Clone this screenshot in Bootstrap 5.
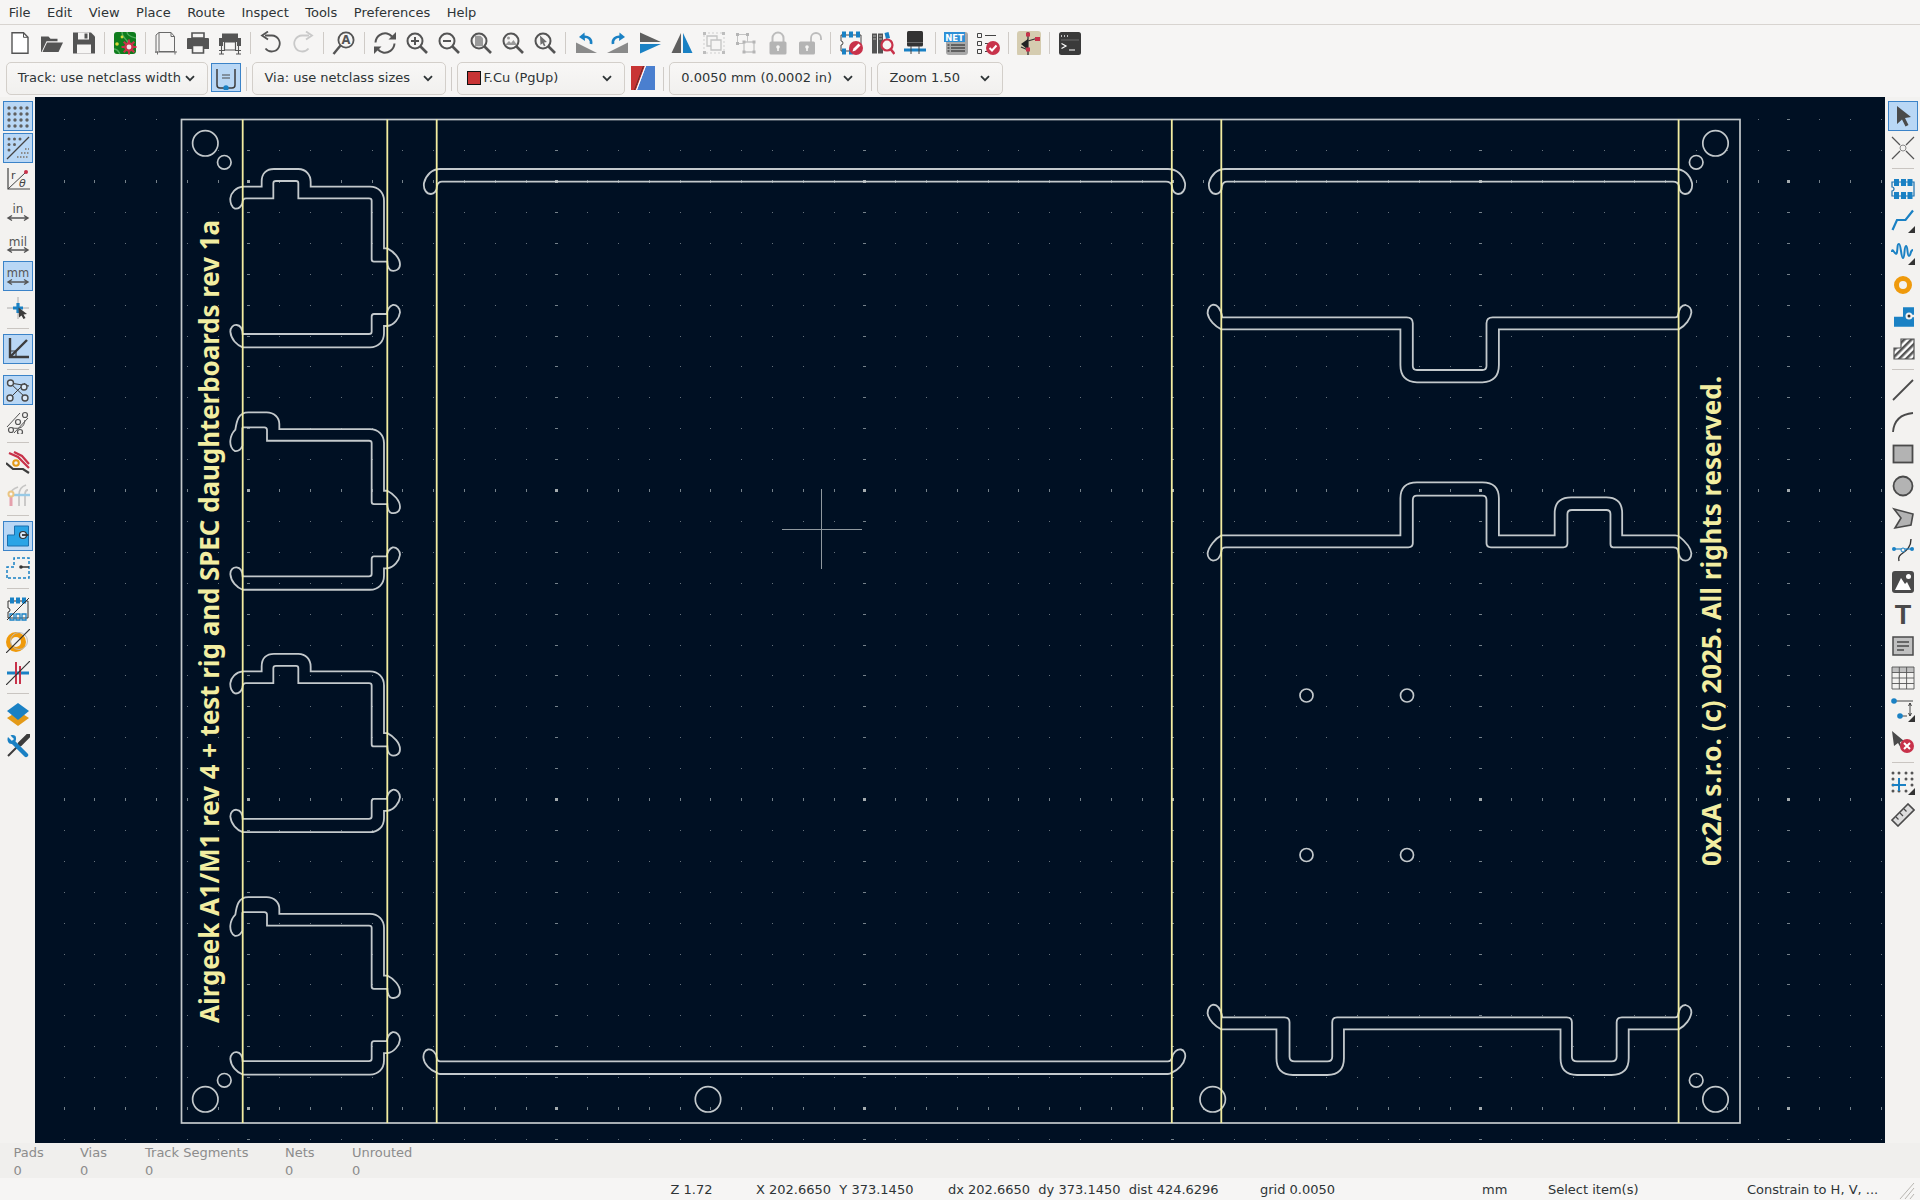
<!doctype html>
<html lang="en"><head><meta charset="utf-8"><title>PCB Editor</title>
<link href="https://cdn.jsdelivr.net/npm/bootstrap@5.3.0/dist/css/bootstrap.min.css" rel="stylesheet">
<style>
html,body{height:1200px;overflow:hidden}
body{font-family:"DejaVu Sans",sans-serif;font-size:13px;color:#2e3436;background:#f6f5f4;width:1920px}
.defs-holder{display:block;height:0;width:0}
.appmenu{height:25px;border-bottom:1px solid #d8d4d0;padding-left:.5px}
.appmenu span{padding:0 8.25px;line-height:23px}
.bar1{height:35px;padding-left:3.6px}
.tb{width:32px;height:35px;flex:none}
.vs{width:1px;height:22px;background:#cfcbc7;margin:0 4px;flex:none}
.bar2{height:37px;padding:1.5px 0 0 5.7px}
.cmb{height:33px;border:1px solid #d3cfca;border-radius:5px;background:linear-gradient(#f8f7f6,#f1f0ee);padding:0 12px 0 11px;flex:none;white-space:nowrap}
.c-track{width:202.3px}.c-via{width:193.2px}.c-layer{width:167.9px;padding-left:9px}.c-grid{width:196.4px}.c-zoom{width:125.5px}
.tgl{width:29.3px;height:29px;margin:1.5px 0 0 3.4px;background:#b9d7f5;border:1px solid #3b83c8;flex:none}
.vs2{width:1px;height:24px;background:#cfcbc7;margin:5px 5.4px 0;flex:none}
.swatch{width:14px;height:14px;background:#c83434;border:1px solid #111;margin-right:2px}
.lyicon{margin:4.5px 8px 0 5.6px;flex:none}
.workarea{height:1046px}
.side{width:35px;flex:none;padding-top:3px;background:#f3f2f0}
.sb{width:35px;height:32px;flex:none}
.sb.on>div{width:30px;height:30px;background:#b9d7f5;border:1px solid #3b83c8}
.hs{width:22px;height:1px;background:#c9c5c1;margin:4px 6.5px;flex:none}
.pcb{display:block;background:#001023;flex:none}
.edge{fill:none;stroke:#c3c9cc;stroke-width:1.8;vector-effect:non-scaling-stroke}
.hole{fill:none;stroke:#c3c9cc;stroke-width:1.7}
.silk{stroke:#f2eda1;stroke-width:1.8}
.brd{fill:#f2eda1;font-family:"Noto Sans",sans-serif;font-weight:700}
.msgpanel{height:35px;background:#f0efed;padding:1px 0 0 13.5px;color:#8c8c8c;line-height:17.5px}
.mc1{width:66.5px}.mc2{width:65px}.mc3{width:140px}.mc4{width:67px}
.statusline{height:22px;padding-left:670.5px;line-height:23px;white-space:pre}
.s1{width:85.5px}.s2{width:192px}.s3{width:312px}.s4{width:222px}.s5{width:66px}.s6{width:199px}.s7{width:150px}
</style></head>
<body>
<svg class="defs-holder">
<defs>
<g id="lens"><circle cx="10" cy="10" r="7.5" fill="none" stroke="#545454" stroke-width="2"/><path d="M15.5 15.5 22 22" stroke="#545454" stroke-width="2.6"/></g>
<symbol id="i-new" viewBox="0 0 24 24"><path d="M4 1.800h11.500l4.500 4.500v16H4z" fill="#fff" stroke="#545454" stroke-width="1.400"/><path d="M15.500 1.800v4.500h4.500" fill="none" stroke="#545454"/></symbol>
<symbol id="i-open" viewBox="0 0 24 24"><path d="M1 21V5.500h7.500l2 2.200h7v2.600H6.500L1.500 21z" fill="#545454"/><path d="M7 11.500h16L18.500 21H2.500z" fill="#545454"/></symbol>
<symbol id="i-save" viewBox="0 0 24 24"><path d="M1 1.500h18l4 4v17H1z" fill="#545454"/><path d="M6 1.500h11v7H6z" fill="#f6f5f4"/><path d="M12.500 2.500h3v5h-3z" fill="#545454"/><path d="M5 13.500h14v9H5z" fill="#f6f5f4"/></symbol>
<symbol id="i-board" viewBox="0 0 24 24"><rect x="1" y="1" width="22" height="22" rx="3" fill="#0f7d1d"/><path d="M9 1c0 7 5 6 6 11M14 1c0 4 5 5 9 6M1 18c4 0 4 2 6 5" fill="none" stroke="#52ad5c" stroke-width="1.300"/><circle cx="4" cy="13" r="1.800" fill="#d8d83c"/><circle cx="9" cy="6" r="1.400" fill="#d8d83c"/><path d="M16 8.500v15M8.500 16h15M10.700 10.700l10.600 10.600M21.300 10.700 10.700 21.300" stroke="#c8324a" stroke-width="2"/><circle cx="16" cy="16" r="4.800" fill="#c8324a"/><circle cx="16" cy="16" r="2.400" fill="#f3e7e7"/></symbol>
<symbol id="i-page" viewBox="0 0 24 24"><path d="M5 1.500H17l3.500 4v15H5zM5 1.500 2 4v18" fill="#f6f5f4" stroke="#6a6a6a"/><path d="M17 1.500v4h3.500M1 21h22M3.500 23.500v-3M21 23.500v-3" fill="none" stroke="#6a6a6a"/></symbol>
<symbol id="i-print" viewBox="0 0 24 24"><path d="M6 2h12v5H6z" fill="#f6f5f4" stroke="#545454" stroke-width="1.600"/><path d="M2 7h20q1 0 1 1v10h-5v-4H6v4H1V8q0-1 1-1z" fill="#545454"/><path d="M6.500 14.500h11V22h-11z" fill="#f6f5f4" stroke="#545454" stroke-width="1.600"/></symbol>
<symbol id="i-plot" viewBox="0 0 24 24"><path d="M4 2.500h16V7H4z" fill="#545454"/><path d="M1 7h22v8h-4v-4H5v4H1z" fill="#545454"/><path d="M6.500 11h11v8h-11z" fill="#f6f5f4" stroke="#545454" stroke-width="1.200"/><path d="M3.500 15v8M20.500 15v8M1 19.500h6M17 19.500h6M1 23h5M18 23h5" stroke="#545454" stroke-width="1.100"/></symbol>
<symbol id="i-undo" viewBox="0 0 24 24"><path d="M6 4.500h7a8 8 0 1 1-6.500 13" fill="none" stroke="#545454" stroke-width="1.800"/><path d="M9 .5 3 4.500l6 4" fill="none" stroke="#545454" stroke-width="1.800"/></symbol>
<symbol id="i-redo" viewBox="0 0 24 24"><path d="M18 4.500h-7a8 8 0 1 0 6.500 13" fill="none" stroke="#c9c9c9" stroke-width="1.800"/><path d="M15 .5l6 4-6 4" fill="none" stroke="#c9c9c9" stroke-width="1.800"/></symbol>
<symbol id="i-find" viewBox="0 0 24 24"><circle cx="14" cy="9" r="7.600" fill="none" stroke="#545454" stroke-width="1.800"/><path d="M8.500 14.500 1.500 23" stroke="#545454" stroke-width="2.400"/><text x="14" y="13" text-anchor="middle" font-size="11.500" font-weight="700" font-family="DejaVu Sans" fill="#545454">A</text></symbol>
<symbol id="i-refresh" viewBox="0 0 24 24"><path d="M2.500 11.500C3 5 9 1.500 14 2.500c2 .4 3.500 1.300 5 3" fill="none" stroke="#545454" stroke-width="2"/><path d="M23 1v7.500h-7.500z" fill="#545454"/><path d="M21.500 12.500C21 19 15 22.500 10 21.500c-2-.4-3.500-1.300-5-3" fill="none" stroke="#545454" stroke-width="2"/><path d="M1 23v-7.500h7.500z" fill="#545454"/></symbol>
<symbol id="i-zin" viewBox="0 0 24 24"><use href="#lens"/><path d="M6 10h8M10 6v8" stroke="#545454" stroke-width="2"/></symbol>
<symbol id="i-zout" viewBox="0 0 24 24"><use href="#lens"/><path d="M6 10h8" stroke="#545454" stroke-width="2"/></symbol>
<symbol id="i-zfit" viewBox="0 0 24 24"><use href="#lens"/><path d="M6 4.800h5.500l2.500 2.500v8H6z" fill="#9a9a9a"/></symbol>
<symbol id="i-zobj" viewBox="0 0 24 24"><use href="#lens"/><circle cx="7.500" cy="7" r="1.500" fill="#9a9a9a"/><path d="M4 14l4-4 2 2 2.500-3 3.500 5z" fill="#9a9a9a"/></symbol>
<symbol id="i-zsel" viewBox="0 0 24 24"><use href="#lens"/><path d="M7 4.500 14 11l-3 .5 1.500 3-1.500.7-1.500-3L7.500 14z" fill="#6f6f6f"/></symbol>
<symbol id="i-lundo" viewBox="0 0 24 24"><path d="M2 22h21L2 11.500z" fill="#8a8a8a"/><path d="M17 13c1-5-3-8-8-7" fill="none" stroke="#1a81c4" stroke-width="2.600"/><path d="M10.500 1.500 5 6l6 4z" fill="#1a81c4"/></symbol>
<symbol id="i-lredo" viewBox="0 0 24 24"><path d="M22 22H1l21-10.500z" fill="#8a8a8a"/><path d="M7 13c-1-5 3-8 8-7" fill="none" stroke="#1a81c4" stroke-width="2.600"/><path d="M13.500 1.500 19 6l-6 4z" fill="#1a81c4"/></symbol>
<symbol id="i-flip" viewBox="0 0 24 24"><path d="M2 1.500 23 11H2z" fill="#5f5f5f"/><path d="M2 13h21L2 22.500z" fill="#1a81c4"/></symbol>
<symbol id="i-mirror" viewBox="0 0 24 24"><path d="M11 2v20H1.500z" fill="#5f5f5f"/><path d="M13 2v20h9.500z" fill="#1a81c4"/></symbol>
<symbol id="i-group" viewBox="0 0 24 24"><path d="M2 2h20v20H2z" fill="none" stroke="#cfcfcf" stroke-dasharray="2 2"/><path d="M1 1h3v3H1zM20 1h3v3h-3zM1 20h3v3H1zM20 20h3v3h-3z" fill="#bdbdbd"/><path d="M5 5h10v10H5z" fill="#f6f5f4" stroke="#c4c4c4" stroke-width="1.300"/><path d="M9 9h10v10H9z" fill="#f6f5f4" stroke="#c4c4c4" stroke-width="1.300"/></symbol>
<symbol id="i-ungroup" viewBox="0 0 24 24"><path d="M3.500 3.500h10v9h-10z" fill="#f6f5f4" stroke="#c4c4c4"/><path d="M10 11h10v10H10z" fill="#f6f5f4" stroke="#c4c4c4" stroke-width="1.300"/><path d="M2 2h3v3H2zM12 2h3v3h-3zM2 11h3v3H2zM8.500 9.500h3v3h-3zM18.500 9.500h3v3h-3zM8.500 19.500h3v3h-3zM18.500 19.500h3v3h-3z" fill="#b5b5b5"/></symbol>
<symbol id="i-lock" viewBox="0 0 24 24"><path d="M6.500 11V7a5.500 5.500 0 0 1 11 0v4" fill="none" stroke="#bcbcbc" stroke-width="2"/><rect x="3.500" y="10.500" width="17" height="13" rx="1.500" fill="#b4b4b4"/><circle cx="12" cy="16" r="1.800" fill="#f6f5f4"/><path d="M11.200 16h1.600v4h-1.600z" fill="#f6f5f4"/></symbol>
<symbol id="i-unlock" viewBox="0 0 24 24"><path d="M13 11V7a5 5 0 0 1 10 0v2" fill="none" stroke="#bcbcbc" stroke-width="1.800"/><rect x="1" y="10.500" width="16" height="13" rx="1.500" fill="#b4b4b4"/><circle cx="9" cy="16" r="1.800" fill="#f6f5f4"/><path d="M8.200 16h1.600v4H8.200z" fill="#f6f5f4"/></symbol>
<symbol id="i-fpedit" viewBox="0 0 24 24"><path d="M2 4h20v16H2V14a2 2 0 0 0 0-4z" fill="#f6f5f4" stroke="#333" stroke-width=".9"/><path d="M3 .5h4v6H3zM10 .5h4v6h-4zM17 .5h4v6h-4zM3 17.500h4v6H3zM10 17.500h4v6h-4z" fill="#1a81c4"/><circle cx="17" cy="17" r="7" fill="#c8324a"/><path d="M13.500 20.500l1-3 5-5 2 2-5 5z" fill="#fff"/></symbol>
<symbol id="i-lib" viewBox="0 0 24 24"><path d="M1 2.500h5v20H1zM7 2.500h5v20H7z" fill="#545454"/><path d="M2 5h3M2 8h3M8 5h3M8 8h3" stroke="#ddd" stroke-width=".7"/><path d="M13.500 2l4-1 1.500 6-4 1z" fill="#1a81c4"/><circle cx="16" cy="14" r="5.500" fill="#f6f5f4" stroke="#c8324a" stroke-width="2.200"/><path d="M19.500 18 23.500 23" stroke="#c8324a" stroke-width="2.600"/></symbol>
<symbol id="i-fp" viewBox="0 0 24 24"><rect x="4" y="0" width="16" height="15.500" rx="1.500" fill="#333"/><path d="M4 11.500h16" stroke="#6a6a6a"/><path d="M1 19h22" stroke="#1a81c4" stroke-width="3"/><path d="M8 15v8M16 15v8" stroke="#444" stroke-width="1"/></symbol>
<symbol id="i-net" viewBox="0 0 24 24"><rect x="2" y="1" width="22" height="23" rx="3" fill="#a8a8a8"/><rect x="0" y="1" width="21" height="10" fill="#2d8fd6"/><text x="10.500" y="9.500" text-anchor="middle" font-size="8.500" font-weight="700" font-family="DejaVu Sans" fill="#fff">NET</text><path d="M7 14h14M7 17h14M7 20h14M3.500 14h2M3.500 17h2M3.500 20h2" stroke="#4a4a4a" stroke-width="1.300"/></symbol>
<symbol id="i-check" viewBox="0 0 24 24"><path d="M1.500 2.500h4v4h-4zM1.500 10.500h4v4h-4zM1.500 18.500h4v4h-4z" fill="none" stroke="#444" stroke-width="1"/><path d="M9 4.500h11M9 12.500h3M9 20.500h3" stroke="#444"/><circle cx="17" cy="17" r="7" fill="#c8324a"/><path d="M13.500 17l2.500 2.500 4.500-5" fill="none" stroke="#fff" stroke-width="2"/></symbol>
<symbol id="i-sch" viewBox="0 0 24 24"><rect x="0" y="0" width="24" height="25" rx="3" fill="#d5ccb0"/><path d="M11 1v6M11 7v12M11 19l-7-3M11 10l10-3M11 19v5" stroke="#333" stroke-width="1.300" fill="none"/><path d="M4 13l7-5v11z" fill="#222"/><path d="M9 1.500h4v4H9zM18 6h5v4h-5zM9 16.500h4v4H9z" fill="#c8324a"/></symbol>
<symbol id="i-term" viewBox="0 0 24 24"><rect x="1" y="1" width="22" height="23" rx="2.500" fill="#3a3a3a"/><path d="M3 5h1M6 5h1M9 5h1" stroke="#eee" stroke-width="1.500"/><path d="M3 9h18" stroke="#777" stroke-width=".8"/><path d="M3.500 12.500 8 15l-4.500 2.500M11 19h6" fill="none" stroke="#fff" stroke-width="1.200"/></symbol>
<symbol id="i-tgl" viewBox="0 0 24 24"><path d="M3 3v16q0 3 3 3h12q3 0 3-3V3" fill="none" stroke="#3c3c3c" stroke-width="1.500"/><path d="M8 9h8M8 12h8" stroke="#4a4a4a" stroke-width="1.200"/><circle cx="12" cy="22" r="2.700" fill="#1a81c4"/></symbol>
<symbol id="i-ly" viewBox="0 0 24 24"><path d="M0 0h14L5 24H0z" fill="#c83434"/><path d="M15 0h9v24H6z" fill="#4a7fcf"/><path d="M14.500 0 5.500 24" stroke="#fff" stroke-width="1"/><path d="M12.500 0 3.500 24" stroke="#222" stroke-width=".6"/></symbol>
<symbol id="i-chev" viewBox="0 0 10 7"><path d="M1 1.200 5 5.200 9 1.200" fill="none" stroke="#2e3436" stroke-width="1.800"/></symbol>

<symbol id="s-grid" viewBox="0 0 24 24"><g fill="#606060"><circle cx="3" cy="4" r="1.700"/><circle cx="9" cy="4" r="1.700"/><circle cx="15" cy="4" r="1.700"/><circle cx="21" cy="4" r="1.700"/><circle cx="3" cy="10" r="1.700"/><circle cx="9" cy="10" r="1.700"/><circle cx="15" cy="10" r="1.700"/><circle cx="21" cy="10" r="1.700"/><circle cx="3" cy="16" r="1.700"/><circle cx="9" cy="16" r="1.700"/><circle cx="15" cy="16" r="1.700"/><circle cx="21" cy="16" r="1.700"/><circle cx="3" cy="22" r="1.700"/><circle cx="9" cy="22" r="1.700"/><circle cx="15" cy="22" r="1.700"/><circle cx="21" cy="22" r="1.700"/></g></symbol>
<symbol id="s-gridov" viewBox="0 0 24 24"><g fill="#606060"><circle cx="3" cy="3" r="1.500"/><circle cx="8.500" cy="3" r="1.500"/><circle cx="14" cy="3" r="1.500"/><circle cx="3" cy="8.500" r="1.500"/><circle cx="8.500" cy="8.500" r="1.500"/><circle cx="3" cy="14" r="1.500"/></g><path d="M1 23 23 1" stroke="#444" stroke-width="1.200"/><path d="M11 21h12M15 17h8M19 13h4" stroke="#8a8a8a" stroke-width="2" stroke-dasharray="1.500 1.500"/></symbol>
<symbol id="s-polar" viewBox="0 0 24 26"><path d="M2 1v21h22" fill="none" stroke="#444" stroke-width="1.200"/><path d="M2 22 19 6" stroke="#444" stroke-width="1"/><circle cx="20" cy="5" r="2" fill="#c8324a"/><text x="5" y="12" font-size="11" font-family="DejaVu Sans" fill="#444">r</text><text x="13" y="20" font-size="11" font-style="italic" font-family="DejaVu Sans" fill="#444">θ</text></symbol>
<symbol id="s-in" viewBox="0 0 24 24"><text x="12" y="13.300" text-anchor="middle" font-size="12" font-family="DejaVu Sans" fill="#555">in</text><path d="M2 18h20M6 15.500 2 18l4 2.500M18 15.500 22 18l-4 2.500" fill="none" stroke="#555" stroke-width="1.400"/></symbol>
<symbol id="s-mil" viewBox="0 0 24 24"><text x="12" y="13.500" text-anchor="middle" font-size="12" font-family="DejaVu Sans" fill="#555">mil</text><path d="M2 18h20M6 15.500 2 18l4 2.500M18 15.500 22 18l-4 2.500" fill="none" stroke="#555" stroke-width="1.400"/></symbol>
<symbol id="s-mm" viewBox="0 0 24 24"><text x="12" y="12.800" text-anchor="middle" font-size="11.500" font-family="DejaVu Sans" fill="#555">mm</text><path d="M2 18h20M6 15.500 2 18l4 2.500M18 15.500 22 18l-4 2.500" fill="none" stroke="#555" stroke-width="1.400"/></symbol>
<symbol id="s-cursor" viewBox="0 0 24 24"><path d="M12 1v22M1 12h22" stroke="#9a9a9a" stroke-width=".8"/><path d="M7 12h10M12 7v10" stroke="#1a81c4" stroke-width="3.200"/><path d="M12.500 11.500 21 18l-3.500.5 2 3.500-2 1-2-3.500-2.500 2z" fill="#3c3c3c"/></symbol>
<symbol id="s-axes" viewBox="0 0 24 24"><path d="M4 1v19h19" fill="none" stroke="#3c3c3c" stroke-width="2.400"/><path d="M4 20 21 3" stroke="#3c3c3c" stroke-width="2.400"/><path d="M4 14h6v6" fill="none" stroke="#3c3c3c" stroke-width="1.200"/></symbol>
<symbol id="s-rats" viewBox="0 0 24 24"><path d="M4 5 20 20M4 20 19 5M4 5l19 3" stroke="#3c3c3c" stroke-width="1"/><g fill="#dbe9f8" stroke="#4a4a4a" stroke-width="1.400"><circle cx="4.500" cy="5" r="3"/><circle cx="18" cy="9" r="3"/><circle cx="4" cy="20" r="3"/><circle cx="19" cy="20" r="3"/></g></symbol>
<symbol id="s-curve" viewBox="0 0 24 24"><path d="M1 17 14 3M8 23 22 8" stroke="#555" stroke-width="1"/><path d="M6 18C14 19 18 18 19 10" fill="none" stroke="#555"/><g fill="#f3f2f0" stroke="#555" stroke-width="1.200"><circle cx="5" cy="20" r="2.500"/><circle cx="12" cy="12" r="2.500"/><circle cx="19" cy="5" r="2.500"/><circle cx="14" cy="22" r="2.500"/></g></symbol>
<symbol id="s-traces" viewBox="0 0 24 24"><path d="M3 2 12 6 17 11 23 17M8 1 16 5 23 13" fill="none" stroke="#c8324a" stroke-width="2.200"/><path d="M0 12 7 18H17L23 22" fill="none" stroke="#3c3c3c" stroke-width="2.200"/><circle cx="10" cy="12" r="2.800" fill="#f3f2f0" stroke="#e39a18" stroke-width="2"/></symbol>
<symbol id="s-pads" viewBox="0 0 24 24" opacity=".5"><path d="M5 23V11M5 11C5 7 9 5 12 4M13 23V12C13 6 17 3 20 2M19 23V12c0-3 1-5 3-5" fill="none" stroke="#9a9a9a" stroke-width="1.800"/><path d="M8 12H24" stroke="#3fa3de" stroke-width="2.400"/><path d="M5 23V13" stroke="#d9506a" stroke-width="3"/><circle cx="5" cy="11" r="2.500" fill="#fff" stroke="#e39a18" stroke-width="2"/></symbol>
<symbol id="s-zone" viewBox="0 0 24 24"><path d="M1.500 22V11h7V2h14v20z" fill="#2aa4e6" stroke="#1a6fae" stroke-width="1"/><circle cx="17" cy="11" r="3.500" fill="#dbe9f8" stroke="#333" stroke-width="1.200"/><path d="M16 11h6.500" stroke="#333" stroke-width="1.800"/></symbol>
<symbol id="s-zoned" viewBox="0 0 24 24"><path d="M1 22V11h7V2h15v20z" fill="none" stroke="#1a81c4" stroke-width="1.500" stroke-dasharray="3 2"/><path d="M14 11h9" stroke="#333" stroke-width="1.500"/><circle cx="15" cy="11" r="1.800" fill="#333"/></symbol>
<symbol id="s-fp" viewBox="0 0 24 24"><path d="M2 4h20v17H2v-6a2 2 0 0 0 0-4z" fill="none" stroke="#333" stroke-width="1"/><path d="M4 .5h4v6H4zM10 .5h4v6h-4zM16 .5h4v6h-4z" fill="#1a81c4"/><path d="M4 17h4v6H4zM10 17h4v6h-4zM16 17h4v6h-4z" fill="none" stroke="#1a81c4" stroke-width="1.300"/><path d="M1 23 23 1" stroke="#333" stroke-width="1"/></symbol>
<symbol id="s-via" viewBox="0 0 24 24"><circle cx="10" cy="13" r="7.500" fill="none" stroke="#ef9a0c" stroke-width="5"/><circle cx="13" cy="12" r="8.500" fill="none" stroke="#bbb" stroke-width="1"/><path d="M0 24 24 0" stroke="#333" stroke-width="1.200"/></symbol>
<symbol id="s-track" viewBox="0 0 24 24"><path d="M1 12h22" stroke="#1a81c4" stroke-width="3"/><path d="M10 1v22M14 5v18" stroke="#c8324a" stroke-width="2"/><path d="M0 24 24 0" stroke="#333" stroke-width="1.200"/></symbol>
<symbol id="s-layers" viewBox="0 0 24 24"><path d="M12 9 23 16 12 24 1 16z" fill="#e39a18"/><path d="M12 1 23 9 12 18 1 9z" fill="#1a81c4"/></symbol>
<symbol id="s-tools" viewBox="0 0 24 24"><path d="M14 10 22.500 1.500" stroke="#3c3c3c" stroke-width="4.600" stroke-linecap="round"/><path d="M2 22 15 9" stroke="#3c3c3c" stroke-width="2"/><path d="M7.500 8.500 20 21" stroke="#1a81c4" stroke-width="4.400" stroke-linecap="round"/><path d="M2 3l4 4 2-2-3.500-3.500C7 .5 10 1 10 4c.5 3-2 6-4.500 6C2.500 10 .5 6.500 2 3z" fill="#1a81c4"/></symbol>

<symbol id="r-arrow" viewBox="0 0 24 24"><path d="M6 2 20 13l-6 1 3.500 7-3 1.500-3.500-7L6 20z" fill="#4a4a4a"/></symbol>
<symbol id="r-x" viewBox="0 0 24 24"><path d="M1 1 9 9M15 15l8 8M1 23l8-8M15 9l8-8" stroke="#555" stroke-width="1.200"/><circle cx="12" cy="12" r="3" fill="none" stroke="#888"/></symbol>
<symbol id="r-chip" viewBox="0 0 24 24"><path d="M1 5h22v14H1v-5a2 2 0 0 0 0-4z" fill="none" stroke="#1a6fae" stroke-width="1.200"/><path d="M3 2h5v7H3zM10 2h5v7h-5zM16.500 2h5v7h-5zM3 15h5v7H3zM10 15h5v7h-5zM16.500 15h5v7h-5z" fill="#1a81c4"/></symbol>
<symbol id="r-route" viewBox="0 0 24 24"><path d="M1.500 21 6 11h8.500L22 1.500" fill="none" stroke="#1a81c4" stroke-width="2.200"/><path d="M24 24h-7l7-7z" fill="#333"/></symbol>
<symbol id="r-tune" viewBox="0 0 24 24"><path d="M1 11c0-6 4 6 5 0s0-8 2-8 2 14 4 14 1-12 3-12 1 10 3 10 1-6 4-6" fill="none" stroke="#1a81c4" stroke-width="2"/><path d="M24 24h-7l7-7z" fill="#333"/></symbol>
<symbol id="r-via" viewBox="0 0 24 24"><circle cx="12" cy="12" r="6.500" fill="none" stroke="#ef9a0c" stroke-width="5"/></symbol>
<symbol id="r-pad" viewBox="0 0 24 24"><path d="M3 21.700V11.700H12V2.300H23V21.700z" fill="#1a81c4"/><circle cx="18" cy="11" r="3.500" fill="#f3f2f0"/><path d="M18 9.800h5v2.400h-5z" fill="#f3f2f0"/><circle cx="18" cy="11" r="1.500" fill="#333"/></symbol>
<symbol id="r-hatch" viewBox="0 0 24 24"><defs><pattern id="hp" width="5" height="5" patternUnits="userSpaceOnUse" patternTransform="rotate(45)"><rect width="5" height="5" fill="#fff"/><rect width="2.500" height="5" fill="#555"/></pattern></defs><path d="M3 22V11h7V2h13v20z" fill="url(#hp)" stroke="#555" stroke-width="1.200"/></symbol>
<symbol id="r-line" viewBox="0 0 24 24"><path d="M2 22 22 2" stroke="#4a4a4a" stroke-width="1.800"/></symbol>
<symbol id="r-arc" viewBox="0 0 24 24"><path d="M2 22C3 10 11 4 22 3" fill="none" stroke="#4a4a4a" stroke-width="1.800"/></symbol>
<symbol id="r-rect" viewBox="0 0 24 24"><rect x="2.500" y="3.500" width="19" height="17" fill="#b3b3b3" stroke="#4a4a4a" stroke-width="1.800"/></symbol>
<symbol id="r-circ" viewBox="0 0 24 24"><circle cx="12" cy="12" r="9.500" fill="#b3b3b3" stroke="#4a4a4a" stroke-width="1.800"/></symbol>
<symbol id="r-poly" viewBox="0 0 24 24"><path d="M3 3 22 8 20 19 4 22 10 12z" fill="#b3b3b3" stroke="#4a4a4a" stroke-width="1.600"/></symbol>
<symbol id="r-bez" viewBox="0 0 24 24"><path d="M8 23C5 14 20 16 20 1" fill="none" stroke="#333" stroke-width="1.400"/><path d="M2 11h20" stroke="#1a81c4" stroke-width="1.200"/><circle cx="3" cy="11" r="2" fill="#1a81c4"/><circle cx="21" cy="11" r="2" fill="#1a81c4"/><circle cx="12" cy="12" r="2" fill="#f3f2f0" stroke="#1a81c4"/></symbol>
<symbol id="r-img" viewBox="0 0 24 24"><rect x="1" y="1" width="22" height="22" rx="3" fill="#4a4a4a"/><circle cx="17.500" cy="6.500" r="2.500" fill="#fff"/><path d="M4 20 10 8l4 6 2-2 4 8z" fill="#fff"/></symbol>
<symbol id="r-text" viewBox="0 0 24 24"><text x="12" y="22" text-anchor="middle" font-size="27" font-weight="700" font-family="Liberation Sans" fill="#4a4a4a">T</text></symbol>
<symbol id="r-tbox" viewBox="0 0 24 24"><rect x="2" y="3" width="20" height="18" fill="#c0c0c0" stroke="#4a4a4a" stroke-width="1.500"/><path d="M6 8h12M6 12h12M6 16h7" stroke="#4a4a4a" stroke-width="1.300"/></symbol>
<symbol id="r-table" viewBox="0 0 24 24"><path d="M1 1h22v5H1z" fill="#c0c0c0"/><path d="M1 1h22v22H1zM1 6.500h22M1 12h22M1 17.500h22M8.300 1v22M15.600 1v22" fill="none" stroke="#555" stroke-width=".9"/></symbol>
<symbol id="r-dim" viewBox="0 0 24 24"><path d="M3 3h19M9 18h7M19 5v13M17.500 8 19 5l1.500 3M17.500 15l1.500 3 1.500-3" fill="none" stroke="#333" stroke-width=".9"/><circle cx="3" cy="3" r="2.800" fill="#1a81c4"/><circle cx="9" cy="18" r="2.800" fill="#1a81c4"/><path d="M24 24h-7l7-7z" fill="#333"/></symbol>
<symbol id="r-del" viewBox="0 0 24 24"><path d="M1 1 13 11l-4 1 1.500 5-1 .5L7 13 3 16z" fill="#4a4a4a"/><circle cx="16" cy="16" r="7" fill="#c8324a"/><path d="M13 13l6 6M19 13l-6 6" stroke="#fff" stroke-width="2"/></symbol>
<symbol id="r-grid" viewBox="0 0 24 24"><g fill="#555"><circle cx="2" cy="2" r="1.500"/><circle cx="8" cy="2" r="1.500"/><circle cx="15" cy="2" r="1.500"/><circle cx="21" cy="2" r="1.500"/><circle cx="2" cy="8" r="1.500"/><circle cx="21" cy="8" r="1.500"/><circle cx="15" cy="8" r="1.500"/><circle cx="2" cy="20" r="1.500"/><circle cx="8" cy="20" r="1.500"/><circle cx="15" cy="20" r="1.500"/><circle cx="21" cy="14" r="1.500"/><circle cx="2" cy="14" r="1.500"/></g><path d="M8 7v13M1 14h14" stroke="#1a81c4" stroke-width="2"/><path d="M24 24h-7l7-7z" fill="#333"/></symbol>
<symbol id="r-ruler" viewBox="0 0 24 24"><path d="M1 17 17 1l6 6L7 23z" fill="#ddd" stroke="#4a4a4a" stroke-width="1.600"/><path d="M5 14l2.500 2.500M9 10l3 3M13 6l2.500 2.500" stroke="#4a4a4a" stroke-width="1.200"/></symbol>
</defs>
</svg>

<div class="appmenu d-flex align-items-center">
<span>File</span><span>Edit</span><span>View</span><span>Place</span><span>Route</span><span>Inspect</span><span>Tools</span><span>Preferences</span><span>Help</span>
</div>

<div class="bar1 d-flex align-items-center" id="tbar1">
<div class="tb d-flex align-items-center justify-content-center"><svg width="24" height="24"><use href="#i-new"/></svg></div>
<div class="tb d-flex align-items-center justify-content-center"><svg width="24" height="24"><use href="#i-open"/></svg></div>
<div class="tb d-flex align-items-center justify-content-center"><svg width="24" height="24"><use href="#i-save"/></svg></div>
<div class="vs"></div>
<div class="tb d-flex align-items-center justify-content-center"><svg width="24" height="24"><use href="#i-board"/></svg></div>
<div class="vs"></div>
<div class="tb d-flex align-items-center justify-content-center"><svg width="24" height="24"><use href="#i-page"/></svg></div>
<div class="tb d-flex align-items-center justify-content-center"><svg width="24" height="24"><use href="#i-print"/></svg></div>
<div class="tb d-flex align-items-center justify-content-center"><svg width="24" height="24"><use href="#i-plot"/></svg></div>
<div class="vs"></div>
<div class="tb d-flex align-items-center justify-content-center"><svg width="24" height="24"><use href="#i-undo"/></svg></div>
<div class="tb d-flex align-items-center justify-content-center"><svg width="24" height="24"><use href="#i-redo"/></svg></div>
<div class="vs"></div>
<div class="tb d-flex align-items-center justify-content-center"><svg width="24" height="24"><use href="#i-find"/></svg></div>
<div class="vs"></div>
<div class="tb d-flex align-items-center justify-content-center"><svg width="24" height="24"><use href="#i-refresh"/></svg></div>
<div class="tb d-flex align-items-center justify-content-center"><svg width="24" height="24"><use href="#i-zin"/></svg></div>
<div class="tb d-flex align-items-center justify-content-center"><svg width="24" height="24"><use href="#i-zout"/></svg></div>
<div class="tb d-flex align-items-center justify-content-center"><svg width="24" height="24"><use href="#i-zfit"/></svg></div>
<div class="tb d-flex align-items-center justify-content-center"><svg width="24" height="24"><use href="#i-zobj"/></svg></div>
<div class="tb d-flex align-items-center justify-content-center"><svg width="24" height="24"><use href="#i-zsel"/></svg></div>
<div class="vs"></div>
<div class="tb d-flex align-items-center justify-content-center"><svg width="24" height="24"><use href="#i-lundo"/></svg></div>
<div class="tb d-flex align-items-center justify-content-center"><svg width="24" height="24"><use href="#i-lredo"/></svg></div>
<div class="tb d-flex align-items-center justify-content-center"><svg width="24" height="24"><use href="#i-flip"/></svg></div>
<div class="tb d-flex align-items-center justify-content-center"><svg width="24" height="24"><use href="#i-mirror"/></svg></div>
<div class="tb d-flex align-items-center justify-content-center"><svg width="24" height="24"><use href="#i-group"/></svg></div>
<div class="tb d-flex align-items-center justify-content-center"><svg width="24" height="24"><use href="#i-ungroup"/></svg></div>
<div class="tb d-flex align-items-center justify-content-center"><svg width="24" height="24"><use href="#i-lock"/></svg></div>
<div class="tb d-flex align-items-center justify-content-center"><svg width="24" height="24"><use href="#i-unlock"/></svg></div>
<div class="vs"></div>
<div class="tb d-flex align-items-center justify-content-center"><svg width="24" height="24"><use href="#i-fpedit"/></svg></div>
<div class="tb d-flex align-items-center justify-content-center"><svg width="24" height="24"><use href="#i-lib"/></svg></div>
<div class="tb d-flex align-items-center justify-content-center"><svg width="24" height="24"><use href="#i-fp"/></svg></div>
<div class="vs"></div>
<div class="tb d-flex align-items-center justify-content-center"><svg width="24" height="24"><use href="#i-net"/></svg></div>
<div class="tb d-flex align-items-center justify-content-center"><svg width="24" height="24"><use href="#i-check"/></svg></div>
<div class="vs"></div>
<div class="tb d-flex align-items-center justify-content-center"><svg width="24" height="24"><use href="#i-sch"/></svg></div>
<div class="vs"></div>
<div class="tb d-flex align-items-center justify-content-center"><svg width="24" height="24"><use href="#i-term"/></svg></div>
</div>

<div class="bar2 d-flex align-items-start">
<div class="cmb c-track d-flex align-items-center justify-content-between"><span>Track: use netclass width</span><svg width="10" height="7"><use href="#i-chev"/></svg></div>
<div class="tgl d-flex align-items-center justify-content-center"><svg width="24" height="24"><use href="#i-tgl"/></svg></div>
<div class="vs2"></div>
<div class="cmb c-via d-flex align-items-center justify-content-between"><span>Via: use netclass sizes</span><svg width="10" height="7"><use href="#i-chev"/></svg></div>
<div class="vs2"></div>
<div class="cmb c-layer d-flex align-items-center"><div class="swatch"></div><span class="flex-grow-1">F.Cu (PgUp)</span><svg width="10" height="7"><use href="#i-chev"/></svg></div>
<svg class="lyicon" width="24" height="24"><use href="#i-ly"/></svg>
<div class="vs2 ms-0"></div>
<div class="cmb c-grid d-flex align-items-center justify-content-between"><span>0.0050 mm (0.0002 in)</span><svg width="10" height="7"><use href="#i-chev"/></svg></div>
<div class="vs2"></div>
<div class="cmb c-zoom d-flex align-items-center justify-content-between"><span>Zoom 1.50</span><svg width="10" height="7"><use href="#i-chev"/></svg></div>
</div>

<div class="workarea d-flex">
<div class="side d-flex flex-column">
<div class="sb on d-flex align-items-center justify-content-center"><div class="d-flex align-items-center justify-content-center"><svg width="24" height="24"><use href="#s-grid"/></svg></div></div>
<div class="sb on d-flex align-items-center justify-content-center"><div class="d-flex align-items-center justify-content-center"><svg width="24" height="24"><use href="#s-gridov"/></svg></div></div>
<div class="sb d-flex align-items-center justify-content-center"><svg width="24" height="26"><use href="#s-polar"/></svg></div>
<div class="sb d-flex align-items-center justify-content-center"><svg width="24" height="24"><use href="#s-in"/></svg></div>
<div class="sb d-flex align-items-center justify-content-center"><svg width="24" height="24"><use href="#s-mil"/></svg></div>
<div class="sb on d-flex align-items-center justify-content-center"><div class="d-flex align-items-center justify-content-center"><svg width="24" height="24"><use href="#s-mm"/></svg></div></div>
<div class="sb d-flex align-items-center justify-content-center"><svg width="24" height="24"><use href="#s-cursor"/></svg></div>
<div class="hs"></div>
<div class="sb on d-flex align-items-center justify-content-center"><div class="d-flex align-items-center justify-content-center"><svg width="24" height="24"><use href="#s-axes"/></svg></div></div>
<div class="hs"></div>
<div class="sb on d-flex align-items-center justify-content-center"><div class="d-flex align-items-center justify-content-center"><svg width="24" height="24"><use href="#s-rats"/></svg></div></div>
<div class="sb d-flex align-items-center justify-content-center"><svg width="24" height="24"><use href="#s-curve"/></svg></div>
<div class="hs"></div>
<div class="sb d-flex align-items-center justify-content-center"><svg width="24" height="24"><use href="#s-traces"/></svg></div>
<div class="sb d-flex align-items-center justify-content-center"><svg width="24" height="24"><use href="#s-pads"/></svg></div>
<div class="hs"></div>
<div class="sb on d-flex align-items-center justify-content-center"><div class="d-flex align-items-center justify-content-center"><svg width="24" height="24"><use href="#s-zone"/></svg></div></div>
<div class="sb d-flex align-items-center justify-content-center"><svg width="24" height="24"><use href="#s-zoned"/></svg></div>
<div class="hs"></div>
<div class="sb d-flex align-items-center justify-content-center"><svg width="24" height="24"><use href="#s-fp"/></svg></div>
<div class="sb d-flex align-items-center justify-content-center"><svg width="24" height="24"><use href="#s-via"/></svg></div>
<div class="sb d-flex align-items-center justify-content-center"><svg width="24" height="24"><use href="#s-track"/></svg></div>
<div class="hs"></div>
<div class="sb d-flex align-items-center justify-content-center"><svg width="24" height="24"><use href="#s-layers"/></svg></div>
<div class="sb d-flex align-items-center justify-content-center"><svg width="24" height="24"><use href="#s-tools"/></svg></div>
</div>

<svg class="pcb" width="1850" height="1046" viewBox="35 97 1850 1046">
<path id="gridminor" fill="#66727c" shape-rendering="crispEdges"/>
<path id="gridmid" fill="#75818a" shape-rendering="crispEdges"/>
<path id="gridmajor" fill="#a4abae" shape-rendering="crispEdges"/>
<path d="M781.600 529h80M821.600 489v80" stroke="#8f989e" stroke-width="1" shape-rendering="crispEdges"/>

<rect class="hole" x="181.500" y="119.500" width="1558.500" height="1003.500"/>
<g>
<circle class="hole" cx="205.300" cy="143.300" r="12.700"/><circle class="hole" cx="224.300" cy="162.300" r="6.800"/>
<circle class="hole" cx="205.300" cy="1099.300" r="12.700"/><circle class="hole" cx="224.300" cy="1080.300" r="6.800"/>
<circle class="hole" cx="1715.500" cy="143.300" r="12.700"/><circle class="hole" cx="1696.200" cy="162.300" r="6.800"/>
<circle class="hole" cx="1715.500" cy="1099.300" r="12.700"/><circle class="hole" cx="1696.200" cy="1080.300" r="6.800"/>
<circle class="hole" cx="708" cy="1099.300" r="12.700"/><circle class="hole" cx="1212.700" cy="1099.300" r="12.700"/>
<circle class="hole" cx="1306.500" cy="695.500" r="6.500"/><circle class="hole" cx="1407" cy="695.500" r="6.500"/>
<circle class="hole" cx="1306.500" cy="855" r="6.500"/><circle class="hole" cx="1407" cy="855" r="6.500"/>
</g>

<defs>
<g id="slot-low"><path class="edge" d="M218 672H597Q605 672 605 665V620Q605 612 612 612H650C652 600 655 590 668 585 680 583 690 595 690 607 688 625 672 645 652 648H642V670C642 695 625 712 600 712H218C200 705 183 688 181 665 181 652 190 644 200 645 210 646 217 655 218 672Z"/></g>
<g id="slot-a"><path class="edge" d="M218 230H275V215C275 190 290 177 312 177H385C408 177 422 195 422 215V230H600C625 230 642 248 642 272V415H652C672 425 690 445 690 463 690 478 678 484 665 482 658 481 652 470 652 455H612Q605 455 605 448V272Q605 265 597 265H385V220Q385 213 378 213H318Q310 213 310 220V265H228Q218 265 217 280C212 293 204 297 195 296 185 292 180 278 181 265 183 248 198 232 218 230Z"/><use href="#slot-low"/></g>
<g id="slot-b"><path class="edge" d="M218 225H283Q291 225 291 233V265H597Q605 265 605 272V448Q605 455 612 455H652C652 470 658 481 665 482 678 484 690 478 690 463 690 445 672 425 652 415H642V272C642 248 625 230 600 230H328V215C328 195 312 180 290 180H235C205 180 200 205 196 232 188 240 182 252 181 265 180 278 185 292 195 296 204 297 212 293 217 280V225"/><use href="#slot-low"/></g>
</defs>
<g transform="translate(170 110) scale(.33333)"><use href="#slot-a"/></g>
<g transform="translate(170 352.400) scale(.33333)"><use href="#slot-b"/></g>
<g transform="translate(170 594.800) scale(.33333)"><use href="#slot-a"/></g>
<g transform="translate(170 837.200) scale(.33333)"><use href="#slot-b"/></g>

<path class="edge" d="M1168 169H440C432 169 426 175 424 183 423 190 427 194 431 194 434 194 437 191 437 186Q438 181.700 442 181.700H1166Q1171 181.700 1172 186C1172 191 1175 194 1178 194 1182 194 1186 190 1185 183 1183 175 1177 169 1168 169Z"/>
<path class="edge" d="M440 1061.300H1168Q1171 1061.300 1172 1058C1173 1052 1177 1049 1181 1049.500 1184 1050 1186 1054 1185 1058 1184 1064 1178 1070 1171.800 1072.700Q1170 1074 1168 1074H440Q438 1074 436.700 1072.700C430 1070 424 1064 423.500 1058 423 1054 425 1050 428 1049.500 432 1049 436 1052 436.700 1058Q437.500 1061.300 440 1061.300Z"/>
<path class="edge" d="M1675 169H1225C1217 169 1211 175 1209 183 1208 190 1212 194 1216 194 1219 194 1222 191 1222 186Q1223 181.700 1227 181.700H1673Q1678 181.700 1679 186C1679 191 1682 194 1685 194 1689 194 1693 190 1692 183 1690 175 1684 169 1675 169Z"/>

<g transform="translate(1200 300) scale(.34435 .33333)">
<path class="edge" d="M65 52H600Q618 52 618 70V198Q618 210 630 210H820Q832 210 832 198V70Q832 52 850 52H1380Q1388 52 1388 45C1392 22 1400 15 1410 15 1422 18 1427 25 1427 38 1425 55 1410 78 1390 88H868V195Q868 245 820 247H630Q582 245 582 195V88H62C45 80 25 60 22 40 22 25 30 15 38 14 50 14 60 25 65 52Z"/>
<path class="edge" d="M62 706H582V595Q582 547 630 547H820Q868 547 868 595V706H1030V640Q1030 592 1078 592H1180Q1226 592 1226 640V706H1380Q1388 706 1392 710C1410 725 1425 745 1427 760 1427 775 1418 782 1410 782 1398 782 1390 770 1388 750Q1385 742 1375 742H1200Q1192 742 1192 732V642Q1192 630 1180 630H1080Q1067 630 1067 642V730Q1067 742 1055 742H845Q832 742 832 730V600Q832 587 820 587H630Q618 587 618 600V730Q618 742 605 742H75Q62 742 62 755C58 775 48 782 38 782 28 780 22 770 22 760 25 740 45 715 62 706Z"/>
</g>
<g transform="translate(1200 990) scale(.34435 .33333)">
<path class="edge" d="M65 82H245Q260 82 260 97V200Q260 214 275 214H370Q384 214 384 200V97Q384 82 398 82H1065Q1080 82 1080 97V200Q1080 214 1095 214H1195Q1210 214 1210 200V97Q1210 82 1225 82H1380Q1388 82 1388 75C1392 52 1400 45 1410 45 1422 48 1427 55 1427 68 1425 85 1410 108 1390 118H1245V205Q1245 255 1195 255H1095Q1047 255 1047 205V118H418V205Q418 255 370 255H270Q222 255 222 205V118H62C45 110 25 90 22 70 22 55 30 45 38 44 50 44 60 55 65 82Z"/>
</g>

<path class="silk" d="M242.700 119.500V1123M387.300 119.500V1123M436.700 119.500V1123M1171.800 119.500V1123M1221.300 119.500V1123M1678.600 119.500V1123"/>

<text class="brd" transform="translate(219 1023) rotate(-90)" font-size="27" textLength="803" lengthAdjust="spacingAndGlyphs">Airgeek A1/M1 rev 4 + test rig and SPEC daughterboards rev 1a</text>
<text class="brd" transform="translate(1720.700 866) rotate(-90)" font-size="27" textLength="490" lengthAdjust="spacingAndGlyphs">0x2A s.r.o. (c) 2025. All rights reserved.</text>
</svg>

<div class="side d-flex flex-column">
<div class="sb on d-flex align-items-center justify-content-center"><div class="d-flex align-items-center justify-content-center"><svg width="24" height="24"><use href="#r-arrow"/></svg></div></div>
<div class="sb d-flex align-items-center justify-content-center"><svg width="24" height="24"><use href="#r-x"/></svg></div>
<div class="hs"></div>
<div class="sb d-flex align-items-center justify-content-center"><svg width="24" height="24"><use href="#r-chip"/></svg></div>
<div class="sb d-flex align-items-center justify-content-center"><svg width="24" height="24"><use href="#r-route"/></svg></div>
<div class="sb d-flex align-items-center justify-content-center"><svg width="24" height="24"><use href="#r-tune"/></svg></div>
<div class="sb d-flex align-items-center justify-content-center"><svg width="24" height="24"><use href="#r-via"/></svg></div>
<div class="sb d-flex align-items-center justify-content-center"><svg width="24" height="24"><use href="#r-pad"/></svg></div>
<div class="sb d-flex align-items-center justify-content-center"><svg width="24" height="24"><use href="#r-hatch"/></svg></div>
<div class="hs"></div>
<div class="sb d-flex align-items-center justify-content-center"><svg width="24" height="24"><use href="#r-line"/></svg></div>
<div class="sb d-flex align-items-center justify-content-center"><svg width="24" height="24"><use href="#r-arc"/></svg></div>
<div class="sb d-flex align-items-center justify-content-center"><svg width="24" height="24"><use href="#r-rect"/></svg></div>
<div class="sb d-flex align-items-center justify-content-center"><svg width="24" height="24"><use href="#r-circ"/></svg></div>
<div class="sb d-flex align-items-center justify-content-center"><svg width="24" height="24"><use href="#r-poly"/></svg></div>
<div class="sb d-flex align-items-center justify-content-center"><svg width="24" height="24"><use href="#r-bez"/></svg></div>
<div class="sb d-flex align-items-center justify-content-center"><svg width="24" height="24"><use href="#r-img"/></svg></div>
<div class="sb d-flex align-items-center justify-content-center"><svg width="24" height="24"><use href="#r-text"/></svg></div>
<div class="sb d-flex align-items-center justify-content-center"><svg width="24" height="24"><use href="#r-tbox"/></svg></div>
<div class="sb d-flex align-items-center justify-content-center"><svg width="24" height="24"><use href="#r-table"/></svg></div>
<div class="sb d-flex align-items-center justify-content-center"><svg width="24" height="24"><use href="#r-dim"/></svg></div>
<div class="sb d-flex align-items-center justify-content-center"><svg width="24" height="24"><use href="#r-del"/></svg></div>
<div class="hs"></div>
<div class="sb d-flex align-items-center justify-content-center"><svg width="24" height="24"><use href="#r-grid"/></svg></div>
<div class="sb d-flex align-items-center justify-content-center"><svg width="24" height="24"><use href="#r-ruler"/></svg></div>
</div>
</div>

<div class="msgpanel d-flex">
<div class="mc1"><div>Pads</div><div>0</div></div>
<div class="mc2"><div>Vias</div><div>0</div></div>
<div class="mc3"><div>Track Segments</div><div>0</div></div>
<div class="mc4"><div>Nets</div><div>0</div></div>
<div><div>Unrouted</div><div>0</div></div>
</div>
<div class="statusline d-flex">
<div class="s1">Z 1.72</div><div class="s2">X 202.6650  Y 373.1450</div><div class="s3">dx 202.6650  dy 373.1450  dist 424.6296</div><div class="s4">grid 0.0050</div><div class="s5">mm</div><div class="s6">Select item(s)</div><div class="s7">Constrain to H, V, ...</div>
<svg width="18" height="22"><path d="M3 21 17 5M8 21 17 10M13 21 17 16" stroke="#b8b5b1" stroke-width="1"/></svg>
</div>

<script>
(function(){
  var a='',b='',c='';
  for(var k=-6;k<=53;k++){for(var j=-2;j<=31;j++){
    var x=Math.round(248.3+30.8*k),y=Math.round(181+30.9*j);
    if(x<36||x>1884||y<98||y>1142)continue;
    var mx=((k%10)+10)%10===0,my=((j%10)+10)%10===0;
    if(mx&&my)c+='M'+(x-1)+' '+(y-1)+'h3v3h-3z';
    else if(mx)b+='M'+(x-1)+' '+y+'h3v1h-3z';
    else if(my)b+='M'+x+' '+(y-1)+'h1v3h-1z';
    else a+='M'+x+' '+y+'h1v1h-1z';
  }}
  document.getElementById('gridminor').setAttribute('d',a);
  document.getElementById('gridmid').setAttribute('d',b);
  document.getElementById('gridmajor').setAttribute('d',c);
})();
</script>
<script src="https://cdn.jsdelivr.net/npm/bootstrap@5.3.0/dist/js/bootstrap.bundle.min.js"></script>
</body></html>
